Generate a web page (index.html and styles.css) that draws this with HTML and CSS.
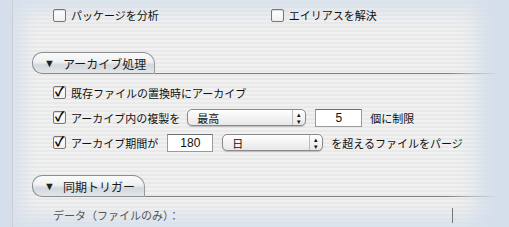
FILE: index.html
```html
<!DOCTYPE html>
<html lang="ja">
<head>
    <meta charset="UTF-8">
    <title>アーカイブ設定</title>
    <link rel="stylesheet" href="styles.css">
</head>
<body>
    <div class="panel">
        <!-- 上部オプション -->
        <div class="row top-row">
            <label class="opt"><span class="box"></span>パッケージを分析</label>
            <label class="opt second"><span class="box"></span>エイリアスを解決</label>
        </div>

        <!-- アーカイブ処理 -->
        <div class="section-head first">
            <div class="tab"><span class="tri">▼</span>アーカイブ処理</div>
            <div class="rule"></div>
        </div>
        <div class="section-body">
            <div class="row">
                <label class="opt"><span class="box on">✓</span>既存ファイルの置換時にアーカイブ</label>
            </div>
            <div class="row">
                <label class="opt"><span class="box on">✓</span>アーカイブ内の複製を</label>
                <div class="popup w-copies"><span class="val">最高</span><span class="arrows">▴<br>▾</span></div>
                <div class="field w-small">5</div>
                <span class="txt">個に制限</span>
            </div>
            <div class="row">
                <label class="opt"><span class="box on">✓</span>アーカイブ期間が</label>
                <div class="field w-days">180</div>
                <div class="popup w-unit"><span class="val">日</span><span class="arrows">▴<br>▾</span></div>
                <span class="txt">を超えるファイルをパージ</span>
            </div>
        </div>

        <!-- 同期トリガー -->
        <div class="section-head second-head">
            <div class="tab tab-short"><span class="tri">▼</span>同期トリガー</div>
            <div class="rule"></div>
        </div>
        <div class="row last-row">
            <span class="muted">データ（ファイルのみ）：</span>
            <span class="vline"></span>
        </div>
    </div>
</body>
</html>
```

FILE: styles.css
```css
body, html {
    margin: 0;
    padding: 0;
    height: 100%;
    background-color: #d5dfeb;
    font-family: "Liberation Sans", "Noto Sans CJK JP", sans-serif;
    font-size: 11px;
    color: #111;
    overflow: hidden;
}
.panel {
    margin: 0 10px 0 12px;
    padding: 3px 0 0 0;
    height: 227px;
    box-sizing: border-box;
    border-left: 1px solid #c9ced6;
    background: repeating-linear-gradient(#f1f1f1 0, #f1f1f1 2px, #e9e9e9 2px, #e9e9e9 4px);
    box-shadow: inset 0 0 22px 8px #d5dfeb, inset -30px 0 25px -10px #d5dfeb;
}
.row {
    display: flex;
    align-items: center;
    height: 25px;
    padding-left: 40px;
}
.top-row {
    height: 24px;
}
.opt {
    display: flex;
    align-items: center;
    white-space: nowrap;
}
.opt.second {
    margin-left: 112px;
}
.box {
    width: 11px;
    height: 11px;
    margin-right: 5px;
    background: linear-gradient(#fff, #f0f0f0);
    border: 1px solid #777;
    border-radius: 2px;
    box-shadow: inset 0 1px 1px rgba(0,0,0,0.15);
    font-size: 13px;
    font-weight: bold;
    line-height: 10px;
    text-align: center;
    color: #000;
}
.section-head {
    display: flex;
    align-items: flex-end;
    padding-left: 19px;
}
.section-head.first {
    margin-top: 25px;
}
.second-head {
    margin-top: 20px;
}
.tab {
    height: 20px;
    width: 110px;
    padding-left: 11px;
    display: flex;
    align-items: center;
    font-size: 12px;
    border: 1px solid #8a8d91;
    border-right-color: #999;
    border-radius: 10px 12px 0 10px;
    background: linear-gradient(#fbfbfb, #eef0f2 45%, #d3d8dd 60%, #e2e6e9);
    color: #1a1a1a;
}
.tab-short {
    width: 100px;
}
.tri {
    font-size: 11px;
    margin-right: 8px;
    color: #222;
}
.rule {
    flex: 1;
    height: 1px;
    background: linear-gradient(to right, #7f7f7f 85%, rgba(127,127,127,0));
}
.section-body {
    padding-top: 6px;
}
.popup {
    height: 17px;
    margin-left: 7px;
    display: flex;
    align-items: center;
    justify-content: space-between;
    border: 1px solid #8a8a8a;
    border-radius: 5px;
    background: linear-gradient(#fff, #f3f3f3 50%, #e8e8e8);
    box-shadow: 0 1px 1px rgba(0,0,0,0.2);
    box-sizing: border-box;
}
.popup .val {
    padding-left: 9px;
}
.popup .arrows {
    width: 13px;
    height: 15px;
    border-left: 1px solid #bbb;
    font-size: 7px;
    line-height: 7px;
    text-align: center;
    padding-top: 1px;
    box-sizing: border-box;
}
.w-copies {
    width: 119px;
}
.w-unit {
    width: 101px;
    margin-left: 9px;
}
.field {
    height: 18px;
    box-sizing: border-box;
    margin-left: 9px;
    border: 1px solid #9a9a9a;
    border-top-color: #6f6f6f;
    background: #fff;
    text-align: center;
    line-height: 16px;
    font-size: 12px;
}
.w-small {
    width: 47px;
}
.w-days {
    width: 46px;
    margin-left: 9px;
}
.txt {
    margin-left: 8px;
    white-space: nowrap;
}
.last-row {
    height: 20px;
    margin-top: 8px;
    color: #555;
}
.muted {
    color: #555;
}
.vline {
    width: 1px;
    height: 15px;
    margin-left: 272px;
    background: #777;
}
```
